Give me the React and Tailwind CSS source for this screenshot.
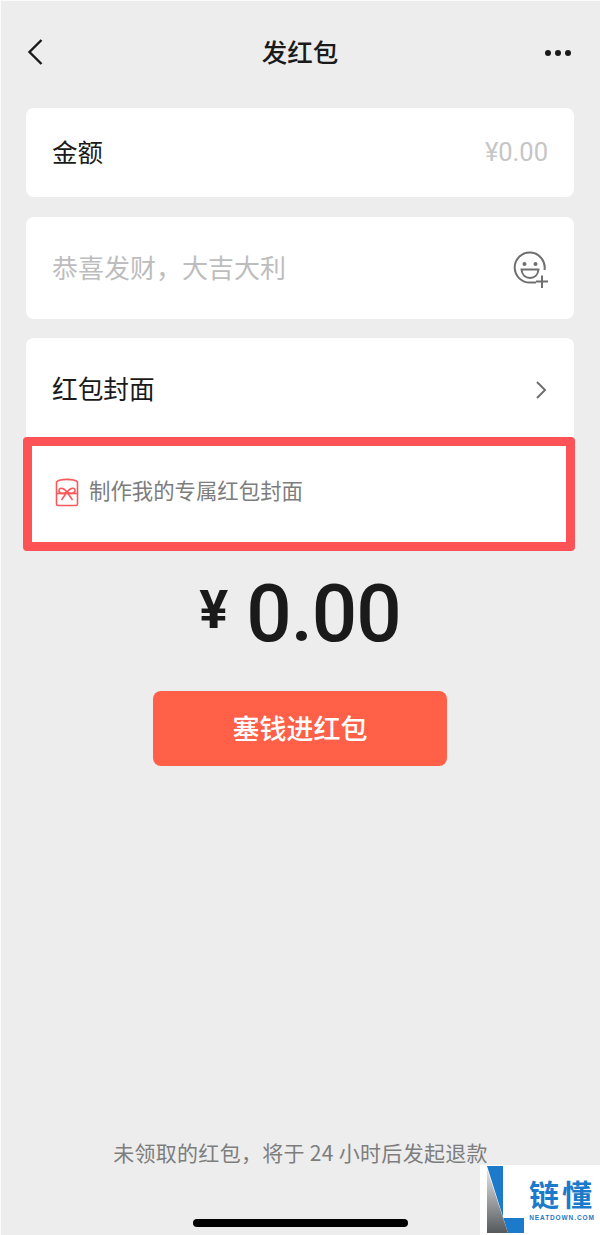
const cjk = "font-['Noto_Sans_CJK_SC','Noto_Sans',sans-serif]";

const BackIcon = () => (
  <svg width="18" height="28" viewBox="0 0 18 28" fill="none" stroke="#1a1a1a" strokeWidth="2.4">
    <path d="M15.5 2 L3.5 14 L15.5 26" />
  </svg>
);

const SmileIcon = () => (
  <svg width="38" height="38" viewBox="0 0 38 38" fill="none" stroke="#6f6f6f" strokeWidth="2">
    <path d="M32.5 19 A15 15 0 1 0 19 31.5 L24 31.5" />
    <circle cx="12.5" cy="13" r="2" fill="#6f6f6f" stroke="none" />
    <circle cx="23.5" cy="13" r="2" fill="#6f6f6f" stroke="none" />
    <path d="M9.5 18.5 H26.5 C26 24 22.5 27 18 27 C13.5 27 10 24 9.5 18.5 Z" />
    <path d="M30 24.5 V37 M24 30.5 H36" />
  </svg>
);

const CoverIcon = () => (
  <svg width="24" height="30" viewBox="0 0 24 30" fill="none" stroke="#f9595b" strokeWidth="1.6">
    <path d="M1.5 5 C5 1.5 19 1.5 22.5 5 V27 A1.5 1.5 0 0 1 21 28.5 H3 A1.5 1.5 0 0 1 1.5 27 Z" />
    <path d="M1.5 16.5 H22.5" />
    <path d="M12 15 C8 10 3.5 10.5 4 14 C4.5 17 9 17 12 15 C15 17 19.5 17 20 14 C20.5 10.5 16 10 12 15 Z" />
    <path d="M12 15 L6.5 23 M12 15 L17.5 23" />
  </svg>
);

const Logo = () => (
  <div className="absolute right-0 bottom-0 flex h-[70px] w-[120px] bg-white">
    <svg className="ml-[7px] mt-[1px] shrink-0" width="38" height="69" viewBox="0 0 38 69">
      <defs>
        <linearGradient id="logoGrey" x1="0" y1="0" x2="0" y2="1">
          <stop offset="0" stopColor="#e4e4e4" />
          <stop offset="1" stopColor="#55595c" />
        </linearGradient>
      </defs>
      <path d="M0 0 H16 V52 H37 V67 H21 Z" fill="#1b7ac9" />
      <path d="M0 3 L21 67 H0 Z" fill="url(#logoGrey)" />
    </svg>
    <div className="ml-[4px] mt-[13px] flex flex-col items-center">
      <div className={`${cjk} text-[30px] leading-[30px] font-bold tracking-[3px] text-[#1b7ac9] whitespace-nowrap`}>
        链懂
      </div>
      <div className="mt-[5px] font-['Liberation_Sans',sans-serif] text-[6.5px] leading-[10px] font-bold tracking-[0.9px] text-[#1b7ac9]">
        NEATDOWN.COM
      </div>
    </div>
  </div>
);

export default function App() {
  return (
    <div className={`${cjk} relative flex h-[1235px] w-[600px] flex-col overflow-hidden border-t border-l border-[#fbfbfb] bg-[#ededed]`}>
      <header className="grid h-[107px] shrink-0 grid-cols-3 items-start pt-[31px] pr-[29px] pl-[25px]">
        <div className="mt-[6px]"><BackIcon /></div>
        <h1 className="pl-[3px] text-center text-[25.5px] leading-[38px] font-medium whitespace-nowrap text-[#1a1a1a]">发红包</h1>
        <div className="mt-[18px] flex justify-end gap-[4px]">
          <span className="size-[6px] rounded-full bg-[#1a1a1a]" />
          <span className="size-[6px] rounded-full bg-[#1a1a1a]" />
          <span className="size-[6px] rounded-full bg-[#1a1a1a]" />
        </div>
      </header>

      <main className="flex flex-col items-center pr-[26px] pl-[25px]">
        <div className="flex h-[89px] w-full items-center justify-between rounded-[8px] bg-white pr-[26px] pl-[26px]">
          <span className="-mt-[2px] text-[25.5px] text-[#1a1a1a]">金额</span>
          <span className="font-['Roboto',sans-serif] text-[25.5px] text-[#c6c6c6]">¥0.00</span>
        </div>

        <div className="mt-[20px] flex h-[102px] w-full items-center justify-between rounded-[8px] bg-white pr-[24px] pl-[26px]">
          <span className="-mt-[4px] text-[26px] text-[#bdbdbd]">恭喜发财，大吉大利</span>
          <div className="mt-[3px]"><SmileIcon /></div>
        </div>

        <div className="relative mt-[19px] w-full rounded-[8px] bg-white">
          <div className="flex h-[99px] items-center justify-between pr-[27px] pl-[26px]">
            <span className="mt-[2px] text-[25.7px] text-[#1a1a1a]">红包封面</span>
            <svg className="mt-[4px]" width="12" height="20" viewBox="0 0 12 20" fill="none" stroke="#6f6f6f" strokeWidth="2">
              <path d="M2 2 L10 10 L2 18" />
            </svg>
          </div>
          <div className="flex h-[114px] items-center gap-[10px] pl-[29px]">
            <div className="-mt-[4px]"><CoverIcon /></div>
            <span className="-mt-[8px] text-[21.4px] text-[#7d7d7d]">制作我的专属红包封面</span>
          </div>
          <div className="absolute top-[99px] -right-px -left-[3px] h-[114px] rounded-[4px] border-[9px] border-[#fd5356]" />
        </div>

        <div className="mt-[27px] flex items-start gap-[18px] font-['Roboto',sans-serif] text-[#1a1a1a]">
          <span className="-mt-[4px] text-[54px] leading-[72px] font-bold">¥</span>
          <span className="text-[80px] leading-[72px] font-medium tracking-[-1px]">0.00</span>
        </div>

        <button className="mt-[41px] h-[75px] w-[294px] rounded-[8px] bg-[#ff6047] text-[27px] font-medium text-white">
          塞钱进红包
        </button>
      </main>

      <footer className="mt-auto flex flex-col items-center">
        <p className="text-[21px] leading-[30px] tracking-[0.3px] text-[#7d7d7d]">未领取的红包，将于 24 小时后发起退款</p>
        <div className="mt-[52px] mb-[8px] h-[8px] w-[215px] rounded-full bg-black" />
      </footer>

      <Logo />
    </div>
  );
}
